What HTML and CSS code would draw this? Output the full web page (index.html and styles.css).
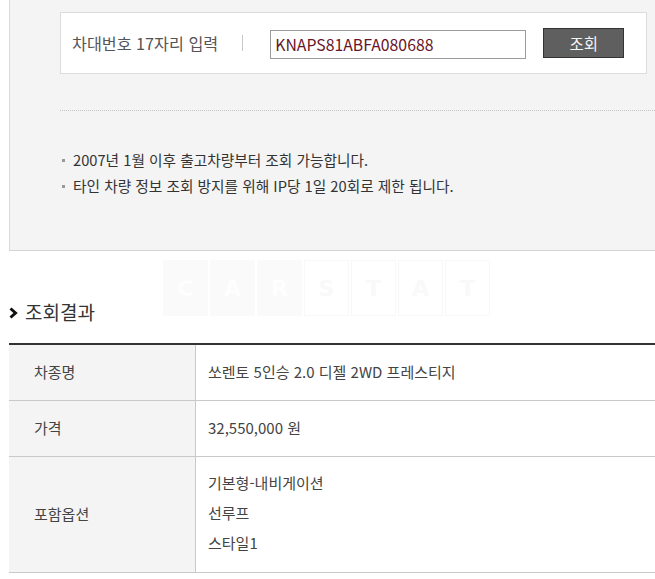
FILE: index.html
```html
<!DOCTYPE html>
<html lang="ko">
<head>
<meta charset="utf-8">
<title>차대번호 조회</title>
<link rel="stylesheet" href="styles.css">
</head>
<body>
<div class="page">
  <section class="panel">
    <div class="search-box">
      <span class="search-label">차대번호 17자리 입력</span>
      <span class="sep"></span>
      <input class="vin-input" type="text" value="KNAPS81ABFA080688">
      <button class="search-btn" type="button">조회</button>
    </div>
    <div class="dotted"></div>
    <ul class="notes">
      <li><span class="dot"></span>2007년 1월 이후 출고차량부터 조회 가능합니다.</li>
      <li><span class="dot"></span>타인 차량 정보 조회 방지를 위해 IP당 1일 20회로 제한 됩니다.</li>
    </ul>
  </section>

  <div class="watermark" aria-hidden="true">
    <span class="wm dark">C</span><span class="wm dark">A</span><span class="wm dark">R</span><span class="wm">S</span><span class="wm">T</span><span class="wm">A</span><span class="wm">T</span>
  </div>

  <h2 class="result-title">
    <svg class="chev" width="9" height="12" viewBox="0 0 9 12"><polyline points="1.5,1.5 6.5,6 1.5,10.5" fill="none" stroke="#111" stroke-width="3"/></svg>
    <span>조회결과</span>
  </h2>

  <div class="result-table">
    <div class="row">
      <div class="th">차종명</div>
      <div class="td">쏘렌토 5인승 2.0 디젤 2WD 프레스티지</div>
    </div>
    <div class="row">
      <div class="th">가격</div>
      <div class="td">32,550,000 원</div>
    </div>
    <div class="row tall">
      <div class="th">포함옵션</div>
      <div class="td options">
        <div>기본형-내비게이션</div>
        <div>선루프</div>
        <div>스타일1</div>
      </div>
    </div>
  </div>
</div>
</body>
</html>
```

FILE: styles.css
```css
* { box-sizing: border-box; }

html, body {
  margin: 0;
  padding: 0;
  background: #fff;
}

body {
  width: 655px;
  height: 579px;
  overflow: hidden;
  font-family: "Noto Sans CJK KR", "Noto Sans", sans-serif;
  color: #333;
}

.page {
  position: relative;
  width: 655px;
}

.panel {
  margin-left: 9px;
  height: 251px;
  background: #f4f4f4;
  border-left: 1px solid #dadada;
  border-bottom: 1px solid #d4d4d4;
  padding: 12px 8px 0 50px;
}

.search-box {
  height: 62px;
  background: #fff;
  border: 1px solid #dcdcdc;
  display: flex;
  align-items: center;
  padding-left: 11px;
  padding-top: 2px;
}

.search-label {
  font-size: 16.2px;
  color: #555;
  line-height: 20px;
  white-space: nowrap;
  margin-top: -3px;
}

.sep {
  display: inline-block;
  width: 1px;
  height: 16px;
  background: #c8c8c8;
  margin-left: 24px;
  margin-top: -2px;
}

.vin-input {
  margin-left: 27px;
  width: 256px;
  height: 29px;
  border: 1px solid #9c9c9c;
  padding: 0 0 0 4px;
  font-family: "Noto Sans CJK KR", "Noto Sans", sans-serif;
  font-size: 15.8px;
  color: #6a1428;
  background: #fff;
  outline: none;
}

.search-btn {
  margin-left: 17px;
  margin-top: -3px;
  width: 81px;
  height: 30px;
  background: #5f5f5f;
  border: 1px solid #333;
  color: #f4f4f4;
  font-family: "Noto Sans CJK KR", "Noto Sans", sans-serif;
  font-size: 15.5px;
  padding: 0;
}

.dotted {
  margin-top: 36px;
  margin-right: -8px;
  border-top: 1px dotted #c4c4c4;
}

.notes {
  list-style: none;
  margin: 36px 0 0 0;
  padding: 0;
}

.notes li {
  font-size: 14.7px;
  line-height: 26px;
  color: #333;
  display: flex;
  align-items: center;
  white-space: nowrap;
}

.dot {
  display: inline-block;
  width: 3px;
  height: 3px;
  background: #999;
  margin-left: 2px;
  margin-right: 8px;
}

.watermark {
  position: absolute;
  left: 163px;
  top: 260px;
  display: flex;
  gap: 2px;
  opacity: 0.5;
}

.wm {
  display: flex;
  align-items: center;
  justify-content: center;
  width: 45px;
  height: 56px;
  background: #fff;
  border: 1px solid #f2f2f2;
  font-family: "DejaVu Sans", sans-serif;
  font-weight: bold;
  font-size: 22px;
  color: #f4f4f4;
}

.wm.dark {
  background: #f7f7f7;
  border-color: #f7f7f7;
  color: #fefefe;
}

.result-title {
  position: relative;
  margin: 49px 0 19px 9px;
  height: 24px;
  display: flex;
  align-items: center;
  font-size: 19px;
  font-weight: normal;
  line-height: 24px;
  color: #333;
}

.chev {
  margin-right: 7px;
  margin-top: 2px;
}

.result-table {
  margin-left: 9px;
  border-top: 2px solid #333;
}

.row {
  display: grid;
  grid-template-columns: 187px 1fr;
  border-bottom: 1px solid #c9c9c9;
  min-height: 56px;
}

.th {
  background: #f4f4f4;
  border-right: 1px solid #c9c9c9;
  padding-left: 25px;
  display: flex;
  align-items: center;
  font-size: 15px;
  color: #444;
  padding-bottom: 2px;
}

.td {
  padding-left: 12px;
  display: flex;
  align-items: center;
  font-size: 15px;
  color: #444;
  white-space: nowrap;
  padding-bottom: 2px;
}

.row.tall {
  height: 116px;
}

.td.options {
  flex-direction: column;
  align-items: flex-start;
  justify-content: flex-start;
  padding-top: 11px;
}

.td.options div {
  line-height: 30px;
}
```
